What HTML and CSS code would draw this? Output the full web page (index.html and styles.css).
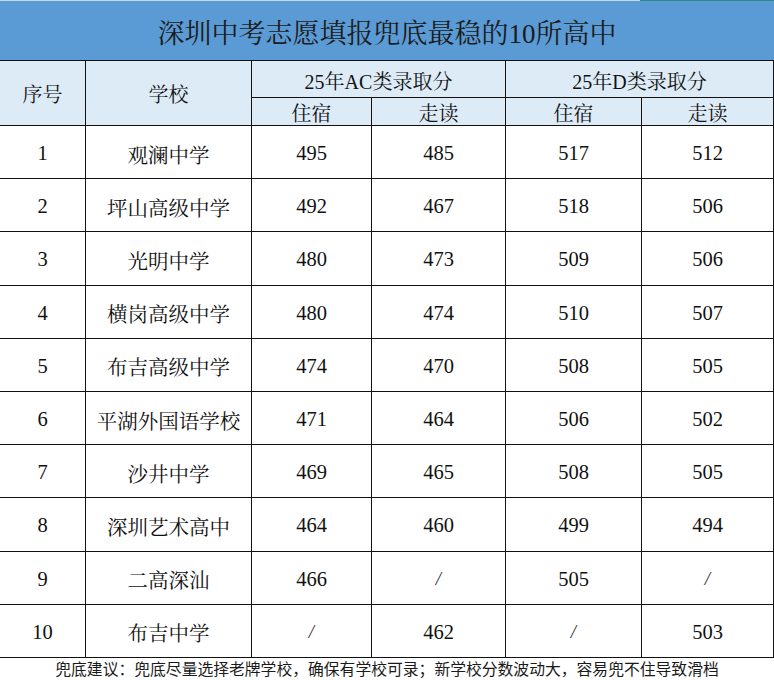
FILE: index.html
```html
<!DOCTYPE html>
<html lang="zh-CN">
<head>
<meta charset="utf-8">
<link rel="stylesheet" href="styles.css">
</head>
<body>
<div class="page">
  <div class="strip"><span class="strip-left"></span><span class="strip-right"></span></div>
  <div class="title">深圳中考志愿填报兜底最稳的10所高中</div>
  <div class="grid">
    <div class="cell head span-rows">序号</div>
    <div class="cell head span-rows">学校</div>
    <div class="cell head span-cols">25年AC类录取分</div>
    <div class="cell head span-cols">25年D类录取分</div>
    <div class="cell head">住宿</div>
    <div class="cell head">走读</div>
    <div class="cell head">住宿</div>
    <div class="cell head">走读</div>

    <div class="cell">1</div><div class="cell">观澜中学</div><div class="cell">495</div><div class="cell">485</div><div class="cell">517</div><div class="cell">512</div>
    <div class="cell">2</div><div class="cell">坪山高级中学</div><div class="cell">492</div><div class="cell">467</div><div class="cell">518</div><div class="cell">506</div>
    <div class="cell">3</div><div class="cell">光明中学</div><div class="cell">480</div><div class="cell">473</div><div class="cell">509</div><div class="cell">506</div>
    <div class="cell">4</div><div class="cell">横岗高级中学</div><div class="cell">480</div><div class="cell">474</div><div class="cell">510</div><div class="cell">507</div>
    <div class="cell">5</div><div class="cell">布吉高级中学</div><div class="cell">474</div><div class="cell">470</div><div class="cell">508</div><div class="cell">505</div>
    <div class="cell">6</div><div class="cell">平湖外国语学校</div><div class="cell">471</div><div class="cell">464</div><div class="cell">506</div><div class="cell">502</div>
    <div class="cell">7</div><div class="cell">沙井中学</div><div class="cell">469</div><div class="cell">465</div><div class="cell">508</div><div class="cell">505</div>
    <div class="cell">8</div><div class="cell">深圳艺术高中</div><div class="cell">464</div><div class="cell">460</div><div class="cell">499</div><div class="cell">494</div>
    <div class="cell">9</div><div class="cell">二高深汕</div><div class="cell">466</div><div class="cell slash">/</div><div class="cell">505</div><div class="cell slash">/</div>
    <div class="cell">10</div><div class="cell">布吉中学</div><div class="cell slash">/</div><div class="cell">462</div><div class="cell slash">/</div><div class="cell">503</div>
  </div>
  <div class="footer">兜底建议：兜底尽量选择老牌学校，确保有学校可录；新学校分数波动大，容易兜不住导致滑档</div>
</div>
</body>
</html>
```
FILE: styles.css
```css
html, body {
  margin: 0;
  padding: 0;
  background: #ffffff;
}
.page {
  width: 774px;
  height: 680px;
  overflow: hidden;
  font-family: "Liberation Serif", "Noto Serif CJK SC", "Noto Sans CJK SC", serif;
  color: #111;
}
.strip {
  display: flex;
  height: 1px;
}
.strip-left {
  width: 640px;
  background: #c8dbee;
}
.strip-right {
  flex: 1;
  background: #2b8d78;
}
.title {
  height: 59px;
  background: #5b9bd5;
  display: flex;
  align-items: center;
  justify-content: center;
  font-size: 27px;
  color: #1c1c1c;
  padding-top: 1px;
  box-sizing: border-box;
}
.grid {
  display: grid;
  grid-template-columns: 85px 165px 119px 133px 135px 131px;
  grid-template-rows: 36px 27px repeat(10, 52.2px);
  gap: 1px;
  background: #111;
  padding: 1px 1px 1px 0;
}
.cell {
  background: #ffffff;
  display: flex;
  align-items: center;
  justify-content: center;
  font-size: 20.5px;
  padding-top: 3px;
  box-sizing: border-box;
}
.head {
  background: #ddebf7;
  font-size: 20px;
  padding-top: 1px;
}
.span-rows {
  grid-row: span 2;
}
.span-cols {
  grid-column: span 2;
  padding-top: 3px;
}
.slash {
  font-size: 19px;
  font-family: "Liberation Serif", serif;
  font-style: italic;
  color: #333;
}
.footer {
  height: 22px;
  line-height: 22px;
  text-align: center;
  font-family: "Noto Sans CJK SC", sans-serif;
  font-size: 15.8px;
  color: #1a1a1a;
  white-space: nowrap;
}
```
